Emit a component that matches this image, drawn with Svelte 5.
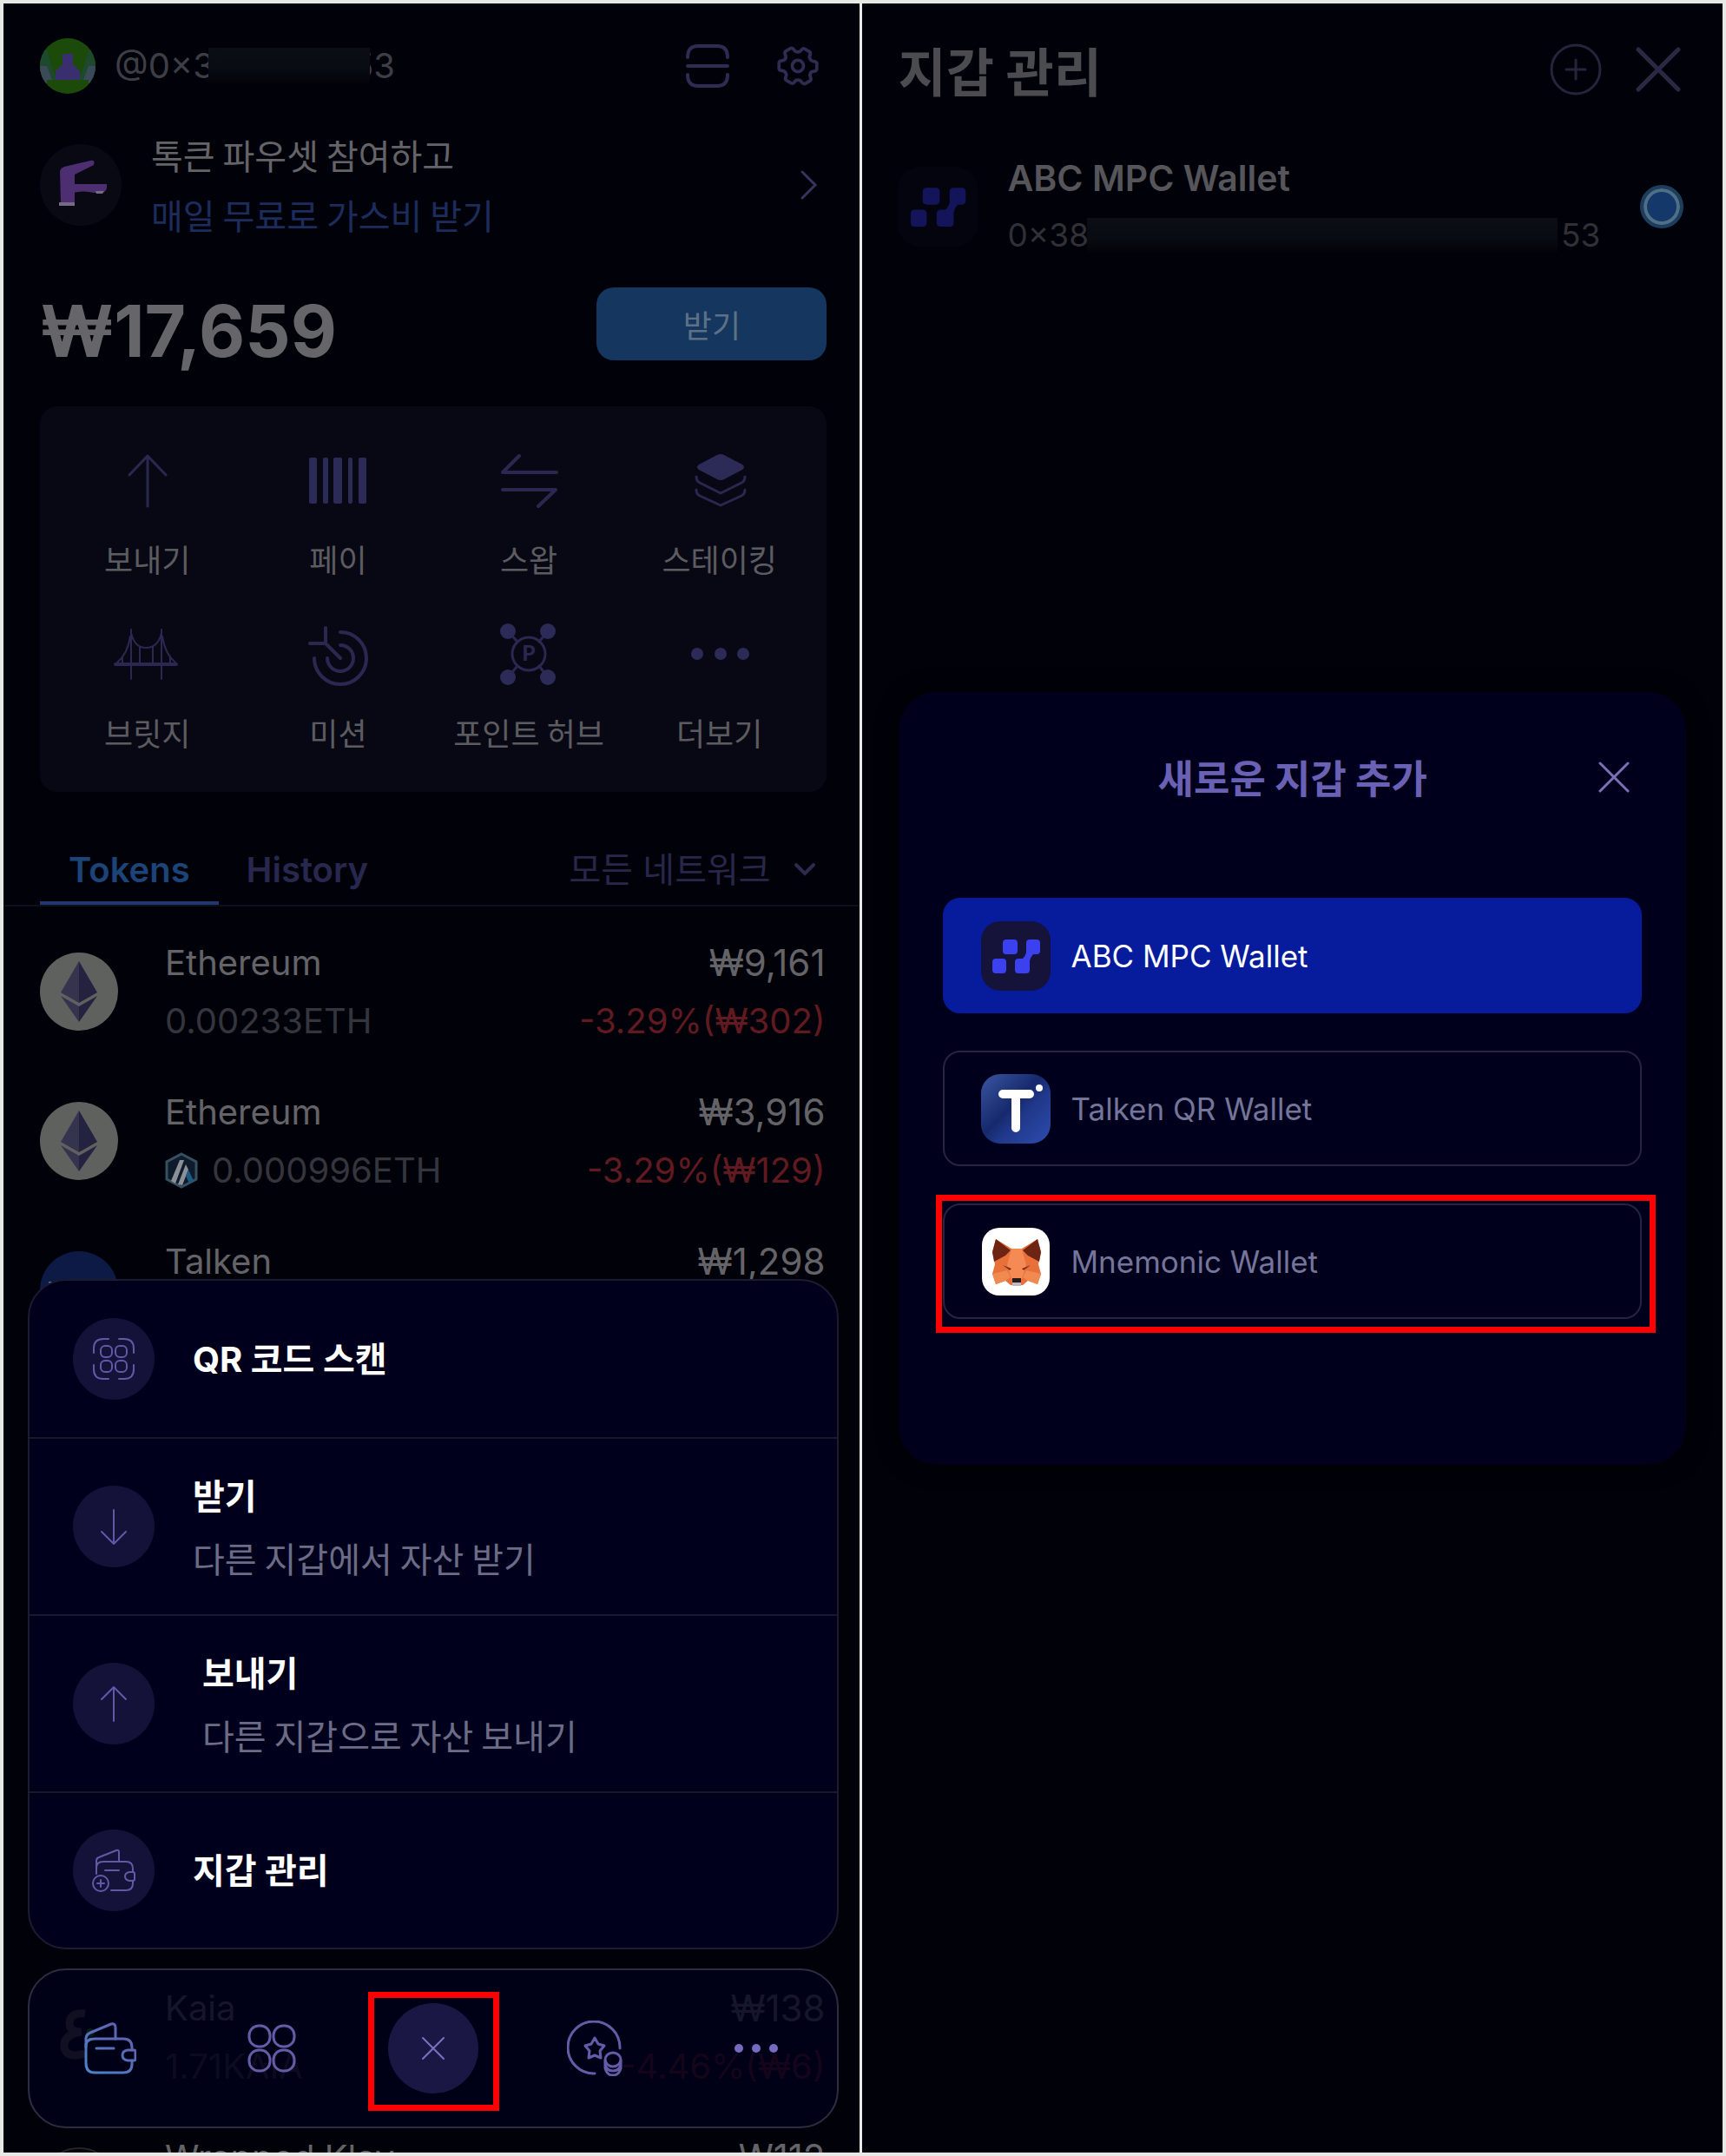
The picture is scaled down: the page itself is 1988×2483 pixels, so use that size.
<script lang="ts">
	type Token = {
		name: string;
		amount: string;
		value: string;
		change: string;
		icon: string;
		chain?: boolean;
	};

	const actions = [
		{ icon: 'send', label: '보내기' },
		{ icon: 'pay', label: '페이' },
		{ icon: 'swap', label: '스왑' },
		{ icon: 'staking', label: '스테이킹' },
		{ icon: 'bridge', label: '브릿지' },
		{ icon: 'mission', label: '미션' },
		{ icon: 'hub', label: '포인트 허브' },
		{ icon: 'more', label: '더보기' }
	];

	const tokens: Token[] = [
		{ name: 'Ethereum', amount: '0.00233ETH', value: '₩9,161', change: '-3.29%(₩302)', icon: 'eth' },
		{ name: 'Ethereum', amount: '0.000996ETH', value: '₩3,916', change: '-3.29%(₩129)', icon: 'eth', chain: true },
		{ name: 'Talken', amount: '', value: '₩1,298', change: '', icon: 'talken' }
	];

	const moreTokens: Token[] = [
		{ name: 'Kaia', amount: '1.71KAIA', value: '₩138', change: '-4.46%(₩6)', icon: 'kaia' },
		{ name: 'Wrapped Klay', amount: '', value: '₩112', change: '', icon: 'klay' }
	];

	const menu = [
		{ icon: 'qr', title: 'QR 코드 스캔', desc: '' },
		{ icon: 'down', title: '받기', desc: '다른 지갑에서 자산 받기' },
		{ icon: 'up', title: '보내기', desc: '다른 지갑으로 자산 보내기', indent: true },
		{ icon: 'wallet-add', title: '지갑 관리', desc: '' }
	];

	const wallets = [
		{ icon: 'abc', name: 'ABC MPC Wallet' },
		{ icon: 'talken', name: 'Talken QR Wallet' },
		{ icon: 'fox', name: 'Mnemonic Wallet', marked: true }
	];

	let tab = $state('Tokens');
	let selected = $state('abc');
	let network = $state('all');
</script>

{#snippet actionIcon(name: string)}
	<svg class="action-icon" viewBox="0 0 80 80" aria-hidden="true">
		{#if name === 'send'}
			<path d="M40 10V68M19 32L40 10L61 32" stroke-width="3" />
		{:else if name === 'pay'}
			<g class="solid">
				<rect x="7" y="12" width="9" height="53" rx="2" />
				<rect x="23" y="12" width="6" height="53" rx="2" />
				<rect x="35" y="12" width="10" height="53" rx="2" />
				<rect x="52" y="12" width="5" height="53" rx="2" />
				<rect x="64" y="12" width="9" height="53" rx="2" />
			</g>
		{:else if name === 'swap'}
			<path d="M72 29H10L29 10M10 49H71L51 68" />
		{:else if name === 'staking'}
			<path class="solid" d="M37 9Q41 7 45 9L66 20Q70 23 66 26L45 37Q41 39 37 37L16 26Q12 23 16 20Z" />
			<path d="M13 34Q13 39 17 41L41 53L65 41Q69 39 69 34M13 49Q13 54 17 56L41 67L65 56Q69 54 69 49" stroke-width="3" />
		{:else if name === 'bridge'}
			<path d="M3 50H73" stroke-width="4" />
			<path d="M21 10V67M56 10V67M21 14Q25 31 38 31Q52 31 56 14M20 18Q17 38 5 48M57 18Q60 38 72 48M31 30V50M46 30V50M11 41V50M66 41V50" stroke-width="2" />
		{:else if name === 'mission'}
			<path d="M43 13A30 30 0 1 1 13 43M43 28A15 15 0 1 1 28 43M43 43L26 26V8M26 26H8" />
		{:else if name === 'hub'}
			<circle cx="40" cy="38" r="19" stroke-width="3" />
			<path d="M16 12L27 24M62 12L52 24M16 65L27 52M62 65L52 52" stroke-width="3" />
			<g class="solid">
				<circle cx="16" cy="12" r="9" />
				<circle cx="62" cy="12" r="9" />
				<circle cx="16" cy="65" r="9" />
				<circle cx="62" cy="65" r="9" />
			</g>
			<text x="40" y="46" text-anchor="middle">P</text>
		{:else}
			<g class="solid">
				<circle cx="14" cy="38" r="7" />
				<circle cx="41" cy="38" r="7" />
				<circle cx="67" cy="38" r="7" />
			</g>
		{/if}
	</svg>
{/snippet}

{#snippet tokenIcon(name: string)}
	<svg class="token-icon" viewBox="0 0 90 90" aria-hidden="true">
		{#if name === 'eth'}
			<circle cx="45" cy="45" r="45" fill="#5f615f" />
			<path d="M45 10L24 46L45 58Z" fill="#34344e" />
			<path d="M45 10L66 46L45 58Z" fill="#232340" />
			<path d="M24 50L45 62V80Z" fill="#34344e" />
			<path d="M66 50L45 62V80Z" fill="#232340" />
		{:else if name === 'talken'}
			<circle cx="45" cy="45" r="45" fill="#0c1a45" />
			<text x="45" y="51" text-anchor="middle" fill="#7f86a0" font-size="22" font-weight="700">Talken</text>
		{:else if name === 'kaia'}
			<circle cx="45" cy="45" r="45" fill="#03030c" />
			<path d="M52 18Q34 16 34 30Q35 40 48 39Q26 42 28 58Q32 70 52 64" fill="none" stroke="#4a4a42" stroke-width="9" />
			<circle cx="58" cy="40" r="5" fill="#2a7a10" />
		{:else}
			<circle cx="45" cy="45" r="44" fill="#050509" stroke="#24242a" stroke-width="2" />
		{/if}
	</svg>
{/snippet}

{#snippet tokenRow(token: Token)}
	<li class="token">
		{@render tokenIcon(token.icon)}
		<div class="token-main">
			<span class="token-name">{token.name}</span>
			<span class="token-amount">
				{#if token.chain}
					<svg class="chain" viewBox="0 0 38 42" aria-hidden="true">
						<path d="M19 2L36 11V31L19 40L2 31V11Z" fill="#0d1b2c" stroke="#37505f" stroke-width="3" />
						<path d="M17 9L7 33L12 36L22 9ZM24 14L15 37L20 38L27 20Z" fill="#8b9096" />
						<path d="M27 20L33 33L28 36L24 27Z" fill="#1d5a80" />
					</svg>
				{/if}
				{token.amount}
			</span>
		</div>
		<div class="token-side">
			<span class="token-value">{token.value}</span>
			<span class="token-change">{token.change}</span>
		</div>
	</li>
{/snippet}

{#snippet abcLogo()}
	<svg class="abc" viewBox="0 0 80 80" aria-hidden="true">
		<rect width="80" height="80" rx="22" class="abc-bg" />
		<path class="abc-fg" d="M29 21H38Q42 21 42 25V34Q42 38 38 38H29Q25 38 25 34V25Q25 21 29 21ZM17 43H25Q29 43 29 47V56Q29 60 25 60H17Q13 60 13 56V47Q13 43 17 43ZM56 21H64Q68 21 68 25V34Q68 38 64 38H60Q57 41 56 46V56Q56 60 52 60H43Q39 60 39 56V47Q39 43 43 43H48Q51 40 52 36V25Q52 21 56 21Z" />
	</svg>
{/snippet}

<div class="frame">
	<main class="screen">
		<header class="account">
			<svg class="avatar" viewBox="0 0 64 64" aria-hidden="true">
				<clipPath id="avatar-clip"><circle cx="32" cy="32" r="32" /></clipPath>
				<g clip-path="url(#avatar-clip)">
					<rect width="64" height="64" fill="#1b4a0a" />
					<path d="M0 14H8L14 34L20 48H0ZM64 14H56L50 34L44 48H64Z" fill="#1d4a2c" />
					<path d="M0 32H8L14 48H50L56 32H64V52H56V48H8V52H0Z" fill="#3b4a58" />
					<path d="M26 18H38V30L46 38V48H18V38L26 30Z" fill="#3a2f6e" />
				</g>
			</svg>
			<span class="handle">@0×3<i class="mask handle-mask"></i>53</span>
			<button class="plain" aria-label="스캔">
				<svg width="50" height="50" viewBox="0 0 50 50" fill="none" stroke="#2f2b52" stroke-width="4" stroke-linecap="round">
					<path d="M2 15Q2 2 14 2H36Q48 2 48 15M2 25H48M2 35Q2 48 14 48H36Q48 48 48 35" />
				</svg>
			</button>
			<button class="plain gear" aria-label="설정">
				<svg width="56" height="56" viewBox="0 0 24 24" fill="none" stroke="#2f2b52" stroke-width="1.6" stroke-linejoin="round">
					<g transform="rotate(30 12 12)">
						<path d="M9.6 4Q9.8 3 10.7 3H13.3Q14.2 3 14.4 4L14.7 5.4Q16 6.6 17 6.3L18.1 5.9Q19 5.6 19.5 6.3L20.8 8.6Q21.2 9.4 20.5 10L19.5 10.9Q18.8 12 19.5 13.1L20.5 14Q21.2 14.6 20.8 15.4L19.5 17.7Q19 18.4 18.1 18.1L17 17.7Q16 17.4 14.7 18.6L14.4 20Q14.2 21 13.3 21H10.7Q9.8 21 9.6 20L9.3 18.6Q8 17.4 7 17.7L5.9 18.1Q5 18.4 4.5 17.7L3.2 15.4Q2.8 14.6 3.5 14L4.5 13.1Q5.2 12 4.5 10.9L3.5 10Q2.8 9.4 3.2 8.6L4.5 6.3Q5 5.6 5.9 5.9L7 6.3Q8 6.6 9.3 5.4Z" />
					</g>
					<circle cx="12" cy="12" r="2.8" />
				</svg>
			</button>
		</header>

		<a class="banner" href="#faucet">
			<svg class="faucet" viewBox="0 0 94 94" aria-hidden="true">
				<circle cx="47" cy="47" r="47" fill="#090913" />
				<path d="M23 32Q23 28 28 26L58 19Q64 18 62 24L40 35V68H24Z" fill="#4d2e70" />
				<path d="M38 46H77Q78 54 72 56H62Q50 53 38 56Z" fill="#4d2e70" />
				<path d="M64 54H74L72 57H65ZM22 67H40V71H22Z" fill="#776a84" />
			</svg>
			<span class="banner-text">
				<span>톡큰 파우셋 참여하고</span>
				<span class="banner-link">매일 무료로 가스비 받기</span>
			</span>
			<svg width="30" height="40" viewBox="0 0 30 40" fill="none" stroke="#37335c" stroke-width="3" stroke-linecap="round">
				<path d="M6 5L21 20L6 35" />
			</svg>
		</a>

		<section class="balance">
			<strong>₩17,659</strong>
			<button class="receive">받기</button>
		</section>

		<section class="actions">
			{#each actions as action}
				<button class="action">
					{@render actionIcon(action.icon)}
					<span>{action.label}</span>
				</button>
			{/each}
		</section>

		<div class="tabs">
			{#each ['Tokens', 'History'] as name}
				<button class="tab" class:active={tab === name} onclick={() => (tab = name)}>{name}</button>
			{/each}
			<label class="network">
				<select bind:value={network} aria-label="네트워크">
					<option value="all">모든 네트워크</option>
				</select>
				<svg width="26" height="20" viewBox="0 0 26 20" fill="none" stroke="#2d2a50" stroke-width="4" stroke-linecap="round">
					<path d="M3 5L13 15L23 5" />
				</svg>
			</label>
		</div>

		<ul class="tokens">
			{#each tokens as token}
				{@render tokenRow(token)}
			{/each}
		</ul>
		<ul class="tokens tokens-below">
			{#each moreTokens as token}
				{@render tokenRow(token)}
			{/each}
		</ul>

		<div class="dock">
			<div class="sheet">
				{#each menu as item}
					<button class="sheet-item" class:tall={item.desc}>
						<svg class="sheet-icon" viewBox="0 0 94 94" aria-hidden="true">
							<circle cx="47" cy="47" r="47" fill="#15123a" />
							<g fill="none" stroke="#6159a6" stroke-width="2" stroke-linecap="round" stroke-linejoin="round">
								{#if item.icon === 'qr'}
									<path d="M24 40V35Q24 24 35 24H41M53 24H59Q70 24 70 35V40M70 54V59Q70 70 59 70H53M41 70H35Q24 70 24 59V54" />
									<rect x="32" y="32" width="13" height="13" rx="5" />
									<rect x="49" y="32" width="13" height="13" rx="5" />
									<rect x="32" y="49" width="13" height="13" rx="5" />
									<rect x="49" y="49" width="13" height="13" rx="5" />
								{:else if item.icon === 'down'}
									<path d="M47 28V67M33 53L47 67L61 53" />
								{:else if item.icon === 'up'}
									<path d="M47 67V28M33 42L47 28L61 42" />
								{:else}
									<path d="M27 51V44Q27 37 35 37H61Q69 37 69 45V49M69 59V62Q69 70 61 70H44" />
									<path d="M27 44V36Q27 33 30 32L50 24Q53 23 53 26V37M37 47H53" />
									<path d="M69 49H65Q60 50 60 54Q60 58 65 59H69Q71 59 71 57V51Q71 49 69 49Z" />
									<circle cx="32" cy="62" r="9" />
									<path d="M32 58V66M28 62H36" />
								{/if}
							</g>
						</svg>
						<span class="sheet-text" class:indent={item.indent}>
							<b>{item.title}</b>
							{#if item.desc}<span class="sheet-desc">{item.desc}</span>{/if}
						</span>
					</button>
				{/each}
			</div>

			<nav class="nav">
				<button aria-label="지갑">
					<svg width="60" height="60" viewBox="0 0 60 60" fill="none" stroke="url(#wallet-stroke)" stroke-width="3" stroke-linecap="round" stroke-linejoin="round">
						<linearGradient id="wallet-stroke" x1="0" y1="60" x2="50" y2="0" gradientUnits="userSpaceOnUse">
							<stop offset="0" stop-color="#4a86c8" />
							<stop offset="1" stop-color="#625cae" />
						</linearGradient>
						<path d="M55 32V29Q55 19 45 19H12Q2 19 2 27V47Q2 58 12 58H45Q55 58 55 48V44" />
						<path d="M2 28V19Q2 14 7 12L31 2Q36 1 36 6V19M14 30H34" />
						<path d="M57 32H50Q44 33 44 38Q44 43 50 44H57Q59 44 59 42V34Q59 32 57 32Z" />
					</svg>
				</button>
				<button aria-label="앱">
					<svg width="56" height="56" viewBox="0 0 56 56" fill="none" stroke="#645ca6" stroke-width="3">
						<rect x="2" y="2" width="24" height="24" rx="11" />
						<rect x="30" y="2" width="24" height="24" rx="11" />
						<rect x="2" y="30" width="24" height="24" rx="11" />
						<rect x="30" y="30" width="24" height="24" rx="11" />
					</svg>
				</button>
				<button aria-label="닫기">
					<svg width="104" height="104" viewBox="0 0 104 104">
						<circle cx="52" cy="52" r="52" fill="#1b1745" />
						<path d="M40 40L64 64M64 40L40 64" stroke="#7a70c0" stroke-width="2" stroke-linecap="round" />
					</svg>
					<i class="mark"></i>
				</button>
				<button aria-label="포인트">
					<svg width="64" height="64" viewBox="0 0 64 64" fill="none" stroke="#645ca6" stroke-width="3" stroke-linecap="round" stroke-linejoin="round">
						<path d="M32 61A30 30 0 1 1 61 32" />
						<path d="M32 20L36 27L43 29L38 35L39 43L32 40L25 43L26 35L21 29L28 27Z" />
						<ellipse cx="53" cy="45" rx="9" ry="8" />
						<path d="M44 46V55Q46 63 53 63Q60 63 62 55V46M44 51Q46 58 53 58Q60 58 62 51" />
					</svg>
				</button>
				<button aria-label="더보기">
					<svg width="54" height="14" viewBox="0 0 54 14" fill="#756bc0">
						<circle cx="7" cy="7" r="5" />
						<circle cx="27" cy="7" r="5" />
						<circle cx="47" cy="7" r="5" />
					</svg>
				</button>
			</nav>
		</div>
	</main>

	<main class="screen manage">
		<header class="manage-head">
			<h1>지갑 관리</h1>
			<button class="plain" aria-label="지갑 추가">
				<svg width="60" height="60" viewBox="0 0 60 60" fill="none" stroke="#26243c" stroke-width="3" stroke-linecap="round">
					<circle cx="30" cy="30" r="28" />
					<path d="M30 19V41M19 30H41" />
				</svg>
			</button>
			<button class="plain manage-close" aria-label="닫기">
				<svg width="52" height="52" viewBox="0 0 52 52" stroke="#2b2844" stroke-width="5" stroke-linecap="round">
					<path d="M3 3L49 49M49 3L3 49" />
				</svg>
			</button>
		</header>

		<label class="current">
			<span class="current-logo">{@render abcLogo()}</span>
			<span class="current-text">
				<b>ABC MPC Wallet</b>
				<span class="address">0×38<i class="mask address-mask"></i>53</span>
			</span>
			<input type="radio" name="current" checked />
		</label>

		<div class="modal" role="dialog" aria-labelledby="add-title">
			<header>
				<h2 id="add-title">새로운 지갑 추가</h2>
				<button class="plain modal-close" aria-label="닫기">
					<svg width="36" height="36" viewBox="0 0 36 36" stroke="#7a70b8" stroke-width="3" stroke-linecap="round">
						<path d="M2 2L34 34M34 2L2 34" />
					</svg>
				</button>
			</header>
			<div class="wallets">
				{#each wallets as wallet}
					<button class="wallet" class:selected={selected === wallet.icon} onclick={() => (selected = wallet.icon)}>
						{#if wallet.icon === 'abc'}
							{@render abcLogo()}
						{:else if wallet.icon === 'talken'}
							<svg viewBox="0 0 80 80" aria-hidden="true">
								<linearGradient id="talken-bg" x1="0" y1="0" x2="1" y2="1">
									<stop offset="0" stop-color="#3a57a2" />
									<stop offset="0.45" stop-color="#16296c" />
									<stop offset="0.6" stop-color="#20388a" />
									<stop offset="1" stop-color="#2d4cae" />
								</linearGradient>
								<rect width="80" height="80" rx="22" fill="url(#talken-bg)" />
								<path d="M25 23H56M40 25V62" stroke="#fff" stroke-width="10" stroke-linecap="round" />
								<circle cx="67" cy="16" r="4" fill="#fff" />
							</svg>
						{:else}
							<svg viewBox="0 0 80 80" aria-hidden="true">
								<rect x="1" y="1" width="78" height="78" rx="20" fill="#fff" />
								<path d="M17 14L35 25H47L65 14L69 29L66 43L69 54L65 66L54 62L48 67H34L28 62L17 66L13 54L16 43L13 29Z" fill="#e8703a" />
								<path d="M17 14L34 27L28 33L15 40L13 29ZM65 14L48 27L54 33L67 40L69 29Z" fill="#6e2412" />
								<path d="M35 25H47L52 44L47 60H35L30 44Z" fill="#f58a55" />
								<path d="M13 54L30 50L34 58L28 62L17 66ZM69 54L52 50L48 58L54 62L65 66Z" fill="#f08a50" />
								<path d="M25 44L35 48L33 50ZM57 44L47 48L49 50Z" fill="#7a3014" />
								<path d="M36 59H46V64H36Z" fill="#2a1a1a" />
								<path d="M36 64H46V68H36Z" fill="#c4b8bc" />
							</svg>
						{/if}
						<span>{wallet.name}</span>
						{#if wallet.marked}<i class="mark"></i>{/if}
					</button>
				{/each}
			</div>
		</div>
	</main>
</div>

<style>
	:global(body) {
		margin: 0;
		background: #e6e9e6;
	}

	.frame {
		display: grid;
		grid-template-columns: 493fr 495fr;
		gap: 3px;
		height: 100vh;
		padding: 4px;
		box-sizing: border-box;
		background: #e6e9e6;
		font-family: Inter, 'Noto Sans CJK KR', sans-serif;
		font-size: 40px;
		color: #646468;
	}

	.screen {
		position: relative;
		display: flex;
		flex-direction: column;
		min-width: 0;
		overflow: hidden;
		background: #010109;
	}

	.screen > * {
		flex-shrink: 0;
	}

	button {
		padding: 0;
		border: 0;
		background: none;
		font: inherit;
		color: inherit;
		cursor: pointer;
	}

	svg {
		display: block;
		flex: none;
	}

	h1,
	h2,
	ul {
		margin: 0;
		padding: 0;
	}

	h1,
	h2,
	.banner-text,
	.action,
	.sheet-desc {
		font-family: 'Noto Sans CJK KR', sans-serif;
	}

	.mask {
		background: linear-gradient(#0b0e15, #080b12 60%, #020309);
	}

	.mark {
		position: absolute;
		border: 7px solid #f00;
	}

	/* home screen */
	.account {
		display: flex;
		align-items: center;
		padding: 38px 43px 0 42px;
	}

	.avatar {
		width: 64px;
		height: 64px;
	}

	.handle {
		display: flex;
		align-items: center;
		margin: 0 auto 0 22px;
		line-height: 68px;
		color: #3e3e46;
	}

	.handle-mask {
		z-index: 1;
		width: 186px;
		height: 42px;
		margin: 0 -20px 0 -7px;
	}

	.gear {
		margin-left: 51px;
	}

	.banner {
		display: flex;
		align-items: center;
		gap: 34px;
		margin: 56px 42px 0;
		color: #646468;
		text-decoration: none;
	}

	.faucet {
		width: 94px;
		height: 94px;
	}

	.banner-text {
		display: flex;
		flex: 1;
		flex-direction: column;
		height: 94px;
		justify-content: center;
		line-height: 69px;
	}

	.banner-link {
		color: #1c2c5c;
	}

	.balance {
		display: flex;
		align-items: flex-end;
		justify-content: space-between;
		margin: 71px 38px 0 42px;
	}

	.balance strong {
		font-size: 82px;
		line-height: 66px;
		color: #66666a;
	}

	.receive {
		width: 265px;
		height: 84px;
		border-radius: 20px;
		background: #14365f;
		font-size: 36px;
		color: #5d7186;
	}

	.actions {
		display: grid;
		grid-template-columns: repeat(4, 1fr);
		row-gap: 50px;
		margin: 53px 38px 0 42px;
		padding: 47px 14px;
		border-radius: 20px;
		background: #080814;
		font-size: 36px;
		line-height: 44px;
		color: #5c5c60;
	}

	.action {
		display: flex;
		flex-direction: column;
		align-items: center;
		gap: 26px;
		font-size: 36px;
		white-space: nowrap;
	}

	.action-icon {
		width: 80px;
		height: 80px;
		fill: none;
		stroke: #2a2850;
		stroke-width: 4;
		stroke-linecap: round;
		stroke-linejoin: round;
	}

	.action-icon .solid {
		fill: #2c2a56;
		stroke: none;
	}

	.action-icon text {
		fill: #2a2850;
		stroke: none;
		font-size: 24px;
		font-weight: 700;
	}

	.tabs {
		display: flex;
		gap: 32px;
		height: 82px;
		margin-top: 48px;
		padding: 0 50px 0 42px;
		border-bottom: 2px solid #0f0f1a;
	}

	.tab {
		border-bottom: 4px solid transparent;
		border-top: 4px solid transparent;
		font-weight: 600;
		color: #28274e;
	}

	.tab.active {
		padding: 0 33px;
		border-bottom-color: #20386e;
		color: #1d4478;
	}

	.network {
		display: flex;
		align-items: center;
		gap: 26px;
		margin-left: auto;
	}

	.network select {
		appearance: none;
		padding: 0;
		border: 0;
		background: transparent;
		font: inherit;
		color: #28274a;
	}

	.tokens {
		padding: 12px 40px 0 42px;
		list-style: none;
	}

	/* rows in between stay under the open sheet */
	.tokens-below {
		padding-top: 688px;
	}

	.token {
		display: flex;
		align-items: center;
		height: 172px;
		line-height: 67px;
		white-space: nowrap;
	}

	.token-icon {
		width: 90px;
		height: 90px;
		margin-right: 54px;
	}

	.token-main,
	.token-side {
		display: flex;
		flex-direction: column;
		height: 134px;
	}

	.token-side {
		margin-left: auto;
		align-items: flex-end;
	}

	.token-value {
		font-size: 42px;
	}

	.token-amount {
		display: flex;
		align-items: center;
		gap: 16px;
		color: #35353e;
	}

	.chain {
		width: 38px;
		height: 42px;
	}

	.token-change {
		color: #601a20;
	}

	.dock {
		position: absolute;
		right: 24px;
		bottom: 28px;
		left: 28px;
		display: flex;
		flex-direction: column;
		gap: 22px;
	}

	.sheet {
		border: 2px solid #1b1b32;
		border-radius: 44px;
		background: #00001c;
	}

	.sheet-item {
		display: flex;
		align-items: center;
		gap: 44px;
		box-sizing: border-box;
		width: 100%;
		height: 180px;
		padding: 0 50px;
		text-align: left;
	}

	.sheet-item.tall {
		height: 204px;
	}

	.sheet-item + .sheet-item {
		border-top: 2px solid #17172e;
	}

	.sheet-icon {
		width: 94px;
		height: 94px;
	}

	.sheet-text {
		display: flex;
		flex-direction: column;
		padding-top: 2px;
		line-height: 70px;
		color: #6c6c86;
	}

	.sheet-text.indent {
		padding-left: 11px;
	}

	.sheet-text b {
		color: #fff;
	}

	.nav {
		display: grid;
		grid-template-columns: repeat(5, 1fr);
		height: 180px;
		border: 2px solid #2d2d42;
		border-radius: 44px;
		background: rgba(0, 0, 26, 0.78);
	}

	.nav button {
		position: relative;
		display: grid;
		place-items: center;
	}

	.nav .mark {
		top: 25px;
		width: 137px;
		height: 123px;
	}

	/* wallet management screen */
	.manage {
		padding: 0 41px;
	}

	.manage-head {
		display: flex;
		align-items: center;
		height: 80px;
		padding-top: 36px;
	}

	h1 {
		margin-right: auto;
		font-size: 60px;
		line-height: 80px;
		color: #4c4c50;
	}

	.manage-close {
		margin: 0 7px 0 39px;
	}

	.current {
		display: flex;
		align-items: center;
		gap: 34px;
		margin-top: 53px;
		padding-right: 4px;
	}

	.current-logo .abc {
		width: 92px;
		height: 92px;
	}

	.abc-bg {
		fill: #15133a;
	}

	.abc-fg {
		fill: #3b41ee;
	}

	.current .abc-bg {
		fill: #04040f;
	}

	.current .abc-fg {
		fill: #14145a;
	}

	.current-text {
		display: flex;
		flex-direction: column;
		line-height: 65px;
		color: #55555a;
	}

	.current-text b {
		font-size: 41px;
		font-weight: 600;
	}

	.address {
		display: flex;
		align-items: center;
		font-size: 37px;
		color: #303036;
	}

	.address-mask {
		width: 542px;
		height: 40px;
		margin: 0 4px 0 -2px;
	}

	.current input {
		appearance: none;
		width: 50px;
		height: 50px;
		margin: 0 0 0 auto;
		border: 4px solid #1d3d5c;
		border-radius: 50%;
		background: #14386a;
		box-shadow: inset 0 0 0 4px #4f6f86;
	}

	.modal {
		position: absolute;
		top: 793px;
		right: 42px;
		left: 42px;
		padding: 64px 51px 168px;
		border-radius: 44px;
		background: #00001c;
		box-shadow: 0 0 24px rgba(0, 0, 0, 0.6);
	}

	.modal header {
		position: relative;
		display: flex;
		align-items: center;
		justify-content: center;
		margin-bottom: 105px;
	}

	h2 {
		font-size: 45px;
		line-height: 68px;
		color: #6a60b4;
	}

	.modal-close {
		position: absolute;
		right: 14px;
	}

	.wallets {
		display: flex;
		flex-direction: column;
		gap: 43px;
	}

	.wallet {
		position: relative;
		display: flex;
		align-items: center;
		gap: 23px;
		height: 133px;
		padding: 0 42px;
		border: 2px solid #262440;
		border-radius: 20px;
		font-size: 35px;
		color: #75759a;
	}

	.wallet.selected {
		border-color: #061c9c;
		background: #061c9c;
		color: #fff;
	}

	.wallet > svg {
		width: 80px;
		height: 80px;
	}

	.wallet .mark {
		inset: -12px -18px -18px -10px;
	}
</style>
